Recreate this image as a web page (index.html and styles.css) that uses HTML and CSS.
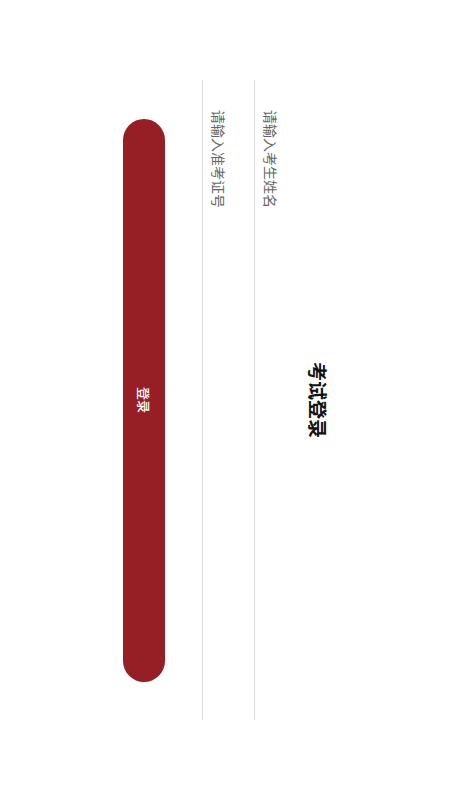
FILE: index.html
```html
<!DOCTYPE html>
<html lang="zh">
<head>
<meta charset="utf-8">
<title>考试登录</title>
<link rel="stylesheet" href="styles.css">
</head>
<body>
<div class="stage">
  <h1 class="title">考试登录</h1>
  <div class="form">
    <div class="field">请输入考生姓名</div>
    <div class="field field-second">请输入准考证号</div>
    <div class="btn">登录</div>
  </div>
</div>
</body>
</html>
```
FILE: styles.css
```css
html, body {
  margin: 0;
  padding: 0;
  background: #ffffff;
}
body {
  width: 450px;
  height: 800px;
  overflow: hidden;
  writing-mode: vertical-rl;
  text-orientation: sideways;
  font-family: "Noto Sans CJK SC", "Noto Sans", sans-serif;
}
.stage {
  inline-size: 800px;
  block-size: 450px;
  box-sizing: border-box;
  padding-block-start: 119px;
  display: flex;
  flex-direction: column;
  align-items: center;
}
.title {
  margin: 0;
  font-size: 19px;
  line-height: 26px;
  font-weight: bold;
  color: #111;
}
.form {
  margin-block-start: 19px;
  inline-size: 640px;
  display: flex;
  flex-direction: column;
  align-items: center;
}
.field {
  inline-size: 640px;
  block-size: 32px;
  box-sizing: border-box;
  border-block-end: 1px solid #dcdcdc;
  padding-inline-start: 30px;
  font-size: 14px;
  line-height: 31px;
  color: #666;
}
.field-second {
  margin-block-start: 20px;
}
.btn {
  margin-block-start: 37px;
  inline-size: 563px;
  block-size: 42px;
  border-radius: 21px;
  background: #961f25;
  color: #fff;
  font-size: 13px;
  font-weight: 500;
  line-height: 42px;
  text-align: center;
}
```
